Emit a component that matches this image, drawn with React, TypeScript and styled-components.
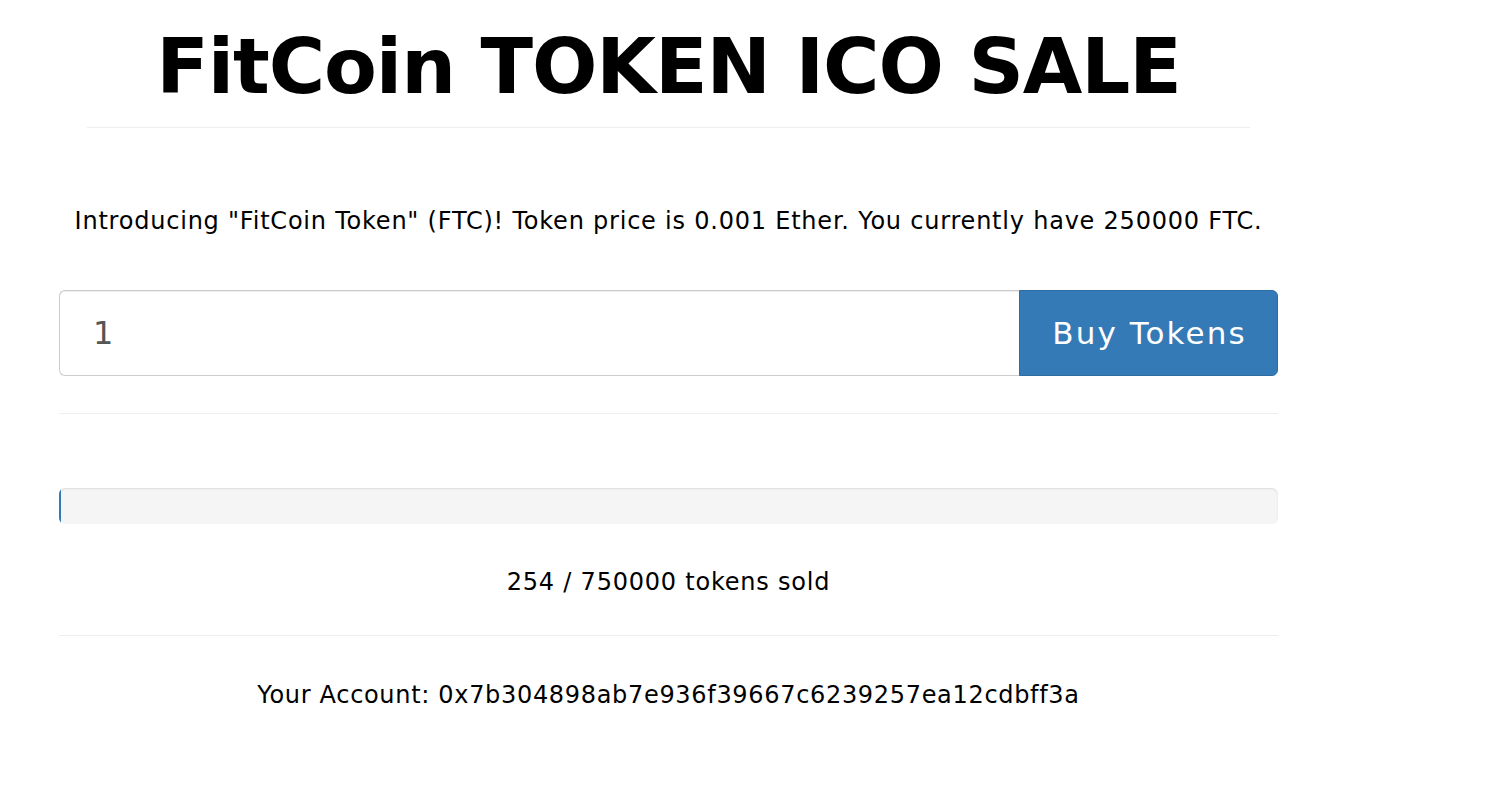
import React from "react";
import styled, { createGlobalStyle } from "styled-components";

const Global = createGlobalStyle`
  html, body { margin: 0; padding: 0; background: #fff; }
  body { font-family: "DejaVu Sans", Verdana, sans-serif; color: #000; }
  * { box-sizing: border-box; }
`;

const Page = styled.div`
  width: 1219px;
  margin-left: 59px;
  display: flex;
  flex-direction: column;
`;

const Header = styled.header`
  margin: 0 28px;
  border-bottom: 1px solid #eee;
  height: 128px;
  display: flex;
  align-items: flex-start;
  justify-content: center;
`;

const Title = styled.h1`
  margin: 19px 0 0;
  font-family: "DejaVu Sans", Verdana, sans-serif;
  font-weight: bold;
  font-size: 77px;
  letter-spacing: -1.1px;
  line-height: 96px;
  text-align: center;
`;

const Text = styled.p<{ $top: number; $spacing?: number }>`
  margin: ${(p) => p.$top}px 0 0;
  font-size: 24px;
  letter-spacing: ${(p) => p.$spacing ?? 0.78}px;
  line-height: 30px;
  text-align: center;
`;

const InputGroup = styled.div`
  margin-top: 54px;
  display: flex;
  height: 86px;
`;

const Input = styled.input`
  flex: 1;
  height: 100%;
  border: 1px solid #ccc;
  border-right: none;
  border-radius: 6px 0 0 6px;
  box-shadow: inset 0 1px 1px rgba(0, 0, 0, 0.075);
  padding: 0 33px;
  font-family: "DejaVu Sans", Verdana, sans-serif;
  font-size: 32px;
  color: #555;
  outline: none;
`;

const Button = styled.button`
  width: 259px;
  height: 100%;
  border: 1px solid #2e6da4;
  border-radius: 0 6px 6px 0;
  background: #337ab7;
  color: #fff;
  font-family: "DejaVu Sans", Verdana, sans-serif;
  font-size: 31px;
  letter-spacing: 2.1px;
  padding: 0 0 0 2px;
`;

const Rule = styled.hr<{ $top: number }>`
  margin: ${(p) => p.$top}px 0 0;
  border: 0;
  border-top: 1px solid #eee;
`;

const Progress = styled.div`
  margin-top: 74px;
  height: 36px;
  background: #f5f5f5;
  border-radius: 6px;
  box-shadow: inset 0 1px 2px rgba(0, 0, 0, 0.1);
  overflow: hidden;
  display: flex;
`;

const Bar = styled.div`
  height: 100%;
  min-width: 2px;
  background: #337ab7;
  box-shadow: inset 0 -1px 0 rgba(0, 0, 0, 0.15);
`;

export default function App() {
  const sold = 254;
  const total = 750000;
  return (
    <>
      <Global />
      <Page>
        <Header>
          <Title>FitCoin TOKEN ICO SALE</Title>
        </Header>
        <Text $top={78}>
          Introducing "FitCoin Token" (FTC)! Token price is 0.001 Ether. You currently have 250000 FTC.
        </Text>
        <InputGroup>
          <Input defaultValue="1" type="number" />
          <Button>Buy Tokens</Button>
        </InputGroup>
        <Rule $top={37} />
        <Progress>
          <Bar style={{ width: `${(sold / total) * 100}%` }} />
        </Progress>
        <Text $top={43}>
          {sold} / {total} tokens sold
        </Text>
        <Rule $top={38} />
        <Text $top={44} $spacing={0.68}>
          Your Account: 0x7b304898ab7e936f39667c6239257ea12cdbff3a
        </Text>
      </Page>
    </>
  );
}
